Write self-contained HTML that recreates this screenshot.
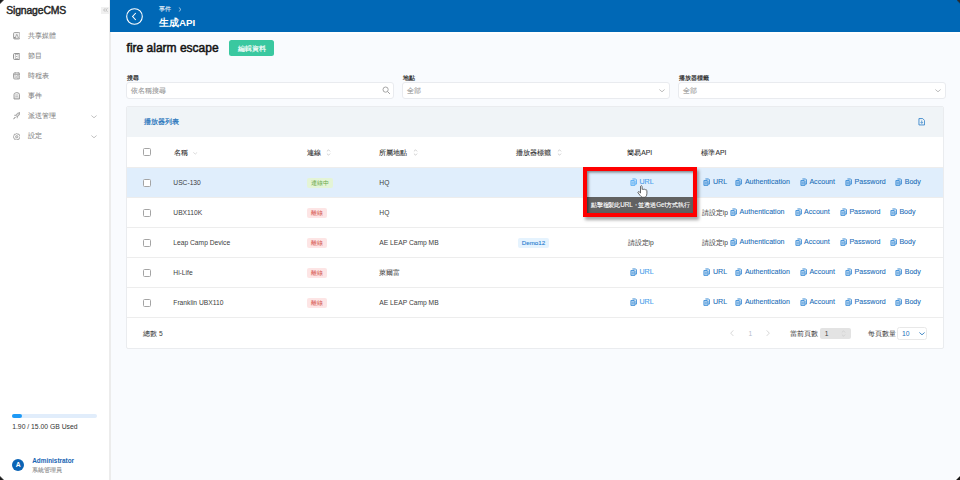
<!DOCTYPE html>
<html><head><meta charset="utf-8">
<style>
*{box-sizing:border-box;margin:0;padding:0}
html,body{width:960px;height:480px;overflow:hidden}
body{position:relative;background:#f9fbfe;font-family:"Liberation Sans",sans-serif;color:#333}
.a{position:absolute;white-space:nowrap}
#side{position:absolute;left:0;top:0;width:111px;height:480px;background:#fff;border-right:2px solid #ececec}
.nav{position:absolute;left:28.3px;font-size:7px;color:#858585;-webkit-text-stroke:0.05px #858585;line-height:10px;white-space:nowrap}
.ni{position:absolute;left:12.5px}
#hdr{position:absolute;left:110px;top:0;width:850px;height:32px;background:#0068b6}
.lbl{position:absolute;top:72.8px;font-size:5.8px;font-weight:bold;color:#333;line-height:10px}
.inp{position:absolute;top:82px;height:16.6px;background:#fff;border:1px solid #e9ebef;border-radius:3px}
.ph{position:absolute;left:4px;top:2.6px;font-size:7px;color:#999;-webkit-text-stroke:0.1px #999;line-height:10px}
#card{position:absolute;left:126px;top:106px;width:818px;height:243px;background:#fff;border:1px solid #eaecef;border-radius:2px;overflow:hidden}
#ch{position:absolute;left:0;top:0;width:816px;height:30px;background:#f0f4f7}
.row{position:absolute;left:0;width:816px;height:30px;border-bottom:1px solid #ededed}
.cb{position:absolute;left:16px;top:11px;width:8px;height:8px;border:1px solid #a4a4a4;border-radius:1.5px;background:#fff}
.c{position:absolute;top:9.9px;line-height:10px;font-size:6.7px;white-space:nowrap}
.th{top:10.7px;color:#333;font-size:6.8px;-webkit-text-stroke:0.1px #333}
.td{color:#3c3c3c}
.row .lnk{top:9.3px}
.lnk{color:#1b6eb8;font-size:7.1px;-webkit-text-stroke:0.08px #1b6eb8}
.ci{color:#3f8ed6;display:inline-block;width:7px;height:8px;vertical-align:-1.6px;margin-right:2.5px;margin-left:0.1px}
.tag{position:absolute;top:9.75px;height:10px;line-height:10px;font-size:5.8px;text-align:center;border-radius:2px}
.on{width:26px;background:#e4f4d6;color:#67a74a}
.off{width:19.6px;background:#fde5e5;color:#d24a43}
.demo{width:30.4px;top:9.9px;font-size:6.2px;background:#e5f3fe;color:#2a7fd0;-webkit-text-stroke:0.1px #2a7fd0}
.sort{position:absolute;top:12.3px}
</style></head><body>
<svg width="0" height="0" style="position:absolute">
 <defs>
  <symbol id="cp" viewBox="0 0 7 8">
   <path d="M2.4 0.9h3.2l0.9 0.9v4.3H5" fill="currentColor" fill-opacity="0.25" stroke="currentColor" stroke-width="0.85"/>
   <path d="M0.9 2.5h3.2l0.8 0.8v4.1H0.9z" fill="currentColor" fill-opacity="0.35" stroke="currentColor" stroke-width="0.9" stroke-linejoin="round"/>
   <path d="M1.8 4.3h2.1M1.8 5.7h2.1" stroke="currentColor" stroke-width="0.6"/>
  </symbol>
 </defs>
</svg>

<div id="side">
  <div class="a" style="left:6.3px;top:3.8px;font-size:10.4px;color:#262626;line-height:14px;letter-spacing:-0.15px;-webkit-text-stroke:0.45px #262626">SignageCMS</div>
  <div class="a" style="left:101.3px;top:6.8px;width:7.5px;height:7.2px;background:#f0f0f0"></div>
  <svg class="a" style="left:102.6px;top:8.4px" width="5" height="4" viewBox="0 0 5 4"><path d="M2.2 0.3L0.6 2l1.6 1.7M4.4 0.3L2.8 2l1.6 1.7" fill="none" stroke="#999" stroke-width="0.6"/></svg>

  <svg class="ni" style="top:32.2px" width="7.5" height="7.5" viewBox="0 0 7.5 7.5"><rect x="0.5" y="0.5" width="6.5" height="6.5" rx="1.2" fill="#f0f0f0" stroke="#909090" stroke-width="0.8"/><path d="M2 6.2L3.8 2.3 5.6 6.2z" fill="#fff" stroke="#8a8a8a" stroke-width="0.7"/><circle cx="1.6" cy="5.8" r="0.8" fill="#888"/></svg>
  <div class="nav" style="top:30.8px">共享媒體</div>
  <svg class="ni" style="top:52.6px" width="7.5" height="7" viewBox="0 0 7.5 7"><rect x="0.6" y="0.6" width="6.3" height="5.8" rx="0.8" fill="none" stroke="#8a8a8a" stroke-width="1"/><rect x="2.4" y="1.6" width="2.7" height="3.8" fill="none" stroke="#a8a8a8" stroke-width="0.6"/><circle cx="3.75" cy="3.5" r="0.6" fill="#8a8a8a"/></svg>
  <div class="nav" style="top:50.8px">節目</div>
  <svg class="ni" style="top:72.4px" width="7.5" height="7.5" viewBox="0 0 7.5 7.5"><rect x="0.5" y="0.9" width="6.5" height="6.1" rx="1.3" fill="#f3f3f3" stroke="#8e8e8e" stroke-width="0.8"/><path d="M0.5 2.6h6.5M2.2 0.3v1.4M5.3 0.3v1.4" stroke="#8e8e8e" stroke-width="0.7"/><circle cx="5" cy="5" r="1.3" fill="#fff" stroke="#858585" stroke-width="0.6"/><path d="M1.4 4h1.4M1.4 5.4h1.4" stroke="#999" stroke-width="0.6"/></svg>
  <div class="nav" style="top:70.8px">時程表</div>
  <svg class="ni" style="top:92.3px" width="7.5" height="7.5" viewBox="0 0 7.5 7.5"><path d="M1 7V2.6Q1 1.1 2.5 0.9L3.75 0.5 5 0.9Q6.5 1.1 6.5 2.6V7z" fill="#f2f2f2" stroke="#8c8c8c" stroke-width="0.8"/><path d="M2.3 3h2.9M2.3 4.6h2.9M1 6.2h5.5" stroke="#a0a0a0" stroke-width="0.6"/></svg>
  <div class="nav" style="top:90.8px">事件</div>
  <svg class="ni" style="top:112.3px" width="7.5" height="7.5" viewBox="0 0 7.5 7.5"><path d="M7 0.5Q4.2 0.8 2.6 3.2L4.3 4.9Q6.7 3.3 7 0.5z" fill="#d6d6d6" stroke="#8a8a8a" stroke-width="0.7"/><path d="M2.6 3.2L1.2 3.3M4.3 4.9L4.2 6.3" stroke="#8a8a8a" stroke-width="0.7"/><path d="M2.1 5.1L0.5 7l1.9-1.6z" fill="#909090" stroke="#909090" stroke-width="0.6"/></svg>
  <div class="nav" style="top:110.8px">派送管理</div>
  <svg class="a" style="left:91px;top:115px" width="6" height="3.5" viewBox="0 0 6 3.5"><path d="M0.4 0.5L3 2.8 5.6 0.5" fill="none" stroke="#a8a8a8" stroke-width="0.7"/></svg>
  <svg class="ni" style="top:132.5px" width="7.5" height="7.5" viewBox="0 0 7.5 7.5"><path d="M3.75 0.5l1.1 0.7h1.2l0.4 1.2 0.8 1.35-0.8 1.35-0.4 1.2H4.85l-1.1 0.7-1.1-0.7H1.45l-0.4-1.2L0.25 3.75l0.8-1.35 0.4-1.2h1.2z" fill="none" stroke="#8a8a8a" stroke-width="0.75"/><circle cx="3.75" cy="3.75" r="1.2" fill="#ddd" stroke="#8a8a8a" stroke-width="0.6"/></svg>
  <div class="nav" style="top:130.8px">設定</div>
  <svg class="a" style="left:91px;top:135px" width="6" height="3.5" viewBox="0 0 6 3.5"><path d="M0.4 0.5L3 2.8 5.6 0.5" fill="none" stroke="#a8a8a8" stroke-width="0.7"/></svg>

  <div class="a" style="left:12px;top:414.2px;width:85.2px;height:3.8px;border-radius:2px;background:#e1edfb"></div>
  <div class="a" style="left:12px;top:414.2px;width:10.4px;height:3.8px;border-radius:2px;background:#1e9af6"></div>
  <div class="a" style="left:12.2px;top:421.5px;font-size:6.8px;color:#333;line-height:10px">1.90 / 15.00 GB Used</div>

  <div class="a" style="left:12px;top:459px;width:12.2px;height:12.2px;border-radius:50%;background:#0b64b5;color:#fff;font-size:6.8px;font-weight:bold;line-height:12.6px;text-align:center">A</div>
  <div class="a" style="left:32.2px;top:455.5px;font-size:6.4px;font-weight:bold;color:#1664b3;line-height:10px">Administrator</div>
  <div class="a" style="left:32.2px;top:465px;font-size:5.9px;color:#8c8c8c;line-height:10px;-webkit-text-stroke:0.1px #8c8c8c">系統管理員</div>
</div>
<div class="a" style="left:0;top:0;width:4px;height:4px;background:linear-gradient(135deg,#1a1a1a 35%,rgba(0,0,0,0) 62%)"></div>
<div class="a" style="left:0;top:476px;width:4px;height:4px;background:linear-gradient(45deg,#1a1a1a 35%,rgba(0,0,0,0) 62%)"></div>

<div class="a" style="left:111px;top:32px;width:849px;height:1.5px;background:#fff"></div>
<div id="hdr">
  <svg class="a" style="left:16px;top:7.5px" width="17" height="17" viewBox="0 0 17 17"><circle cx="8.5" cy="8.5" r="7.8" fill="none" stroke="#fff" stroke-width="1.1"/><path d="M9.8 5L6.6 8.5l3.2 3.5" fill="none" stroke="#fff" stroke-width="1.1"/></svg>
  <div class="a" style="left:49px;top:4px;font-size:5.6px;color:#e8f0f8;line-height:10px;-webkit-text-stroke:0.1px #e8f0f8">事件</div>
  <svg class="a" style="left:68px;top:6.5px" width="4" height="5" viewBox="0 0 4 5"><path d="M0.8 0.4L3 2.5 0.8 4.6" fill="none" stroke="#dbe6f2" stroke-width="0.7"/></svg>
  <div class="a" style="left:49px;top:16px;font-size:9.8px;font-weight:bold;color:#fff;line-height:13px">生成API</div>
</div>

<div class="a" style="left:126.6px;top:40.8px;font-size:12px;color:#141414;line-height:15px;-webkit-text-stroke:0.5px #141414">fire alarm escape</div>
<div class="a" style="left:229.2px;top:40.3px;width:45px;height:16px;background:#3ac8a0;border-radius:2.5px;color:#fff;font-size:6.6px;line-height:17.2px;text-align:center;-webkit-text-stroke:0.15px #fff">編輯資料</div>

<div class="lbl" style="left:127px">搜尋</div>
<div class="lbl" style="left:402.6px">地點</div>
<div class="lbl" style="left:678.9px">播放器標籤</div>
<div class="inp" style="left:126px;width:268px">
  <div class="ph">依名稱搜尋</div>
  <svg class="a" style="left:254.5px;top:3.3px" width="9" height="9" viewBox="0 0 9 9"><circle cx="3.6" cy="3.6" r="2.6" fill="none" stroke="#9c9c9c" stroke-width="0.9"/><path d="M5.5 5.5L7.9 7.9" stroke="#9c9c9c" stroke-width="1"/></svg>
</div>
<div class="inp" style="left:402px;width:268px">
  <div class="ph">全部</div>
  <svg class="a" style="left:256px;top:6.3px" width="6" height="3.5" viewBox="0 0 6 3.5"><path d="M0.4 0.5L3 2.8 5.6 0.5" fill="none" stroke="#a0a0a0" stroke-width="0.7"/></svg>
</div>
<div class="inp" style="left:678px;width:267.5px">
  <div class="ph">全部</div>
  <svg class="a" style="left:255.8px;top:6.3px" width="6" height="3.5" viewBox="0 0 6 3.5"><path d="M0.4 0.5L3 2.8 5.6 0.5" fill="none" stroke="#a0a0a0" stroke-width="0.7"/></svg>
</div>

<div id="card">
  <div id="ch">
    <div class="c lnk" style="left:16.5px;top:9.7px;color:#2272bb;-webkit-text-stroke:0.2px #2272bb">播放器列表</div>
    <svg class="a" style="left:790.7px;top:11px" width="7.5" height="7.5" viewBox="0 0 8 8"><path d="M1 0.6h4l2 2v4.8H1z" fill="none" stroke="#2f80c8" stroke-width="0.9"/><path d="M4 2.6v3M2.7 4.4L4 5.7 5.3 4.4" fill="none" stroke="#2f80c8" stroke-width="0.8"/></svg>
  </div>
  <div class="row" style="top:30px;height:31px">
    <div class="cb"></div>
    <div class="c th" style="left:46.5px">名稱</div>
    <svg class="a" style="left:66.2px;top:15.2px" width="4.5" height="2.6" viewBox="0 0 6 3.5"><path d="M0.4 0.5L3 2.8 5.6 0.5" fill="none" stroke="#b0b0b0" stroke-width="0.6"/></svg>
    <div class="c th" style="left:179.8px">連線</div>
    <svg class="sort" style="left:199px" width="5" height="7" viewBox="0 0 5 7"><path d="M0.9 2.4L2.5 0.8 4.1 2.4M0.9 4.6L2.5 6.2 4.1 4.6" fill="none" stroke="#b0b0b0" stroke-width="0.6"/></svg>
    <div class="c th" style="left:252.3px">所屬地點</div>
    <svg class="sort" style="left:286px" width="5" height="7" viewBox="0 0 5 7"><path d="M0.9 2.4L2.5 0.8 4.1 2.4M0.9 4.6L2.5 6.2 4.1 4.6" fill="none" stroke="#b0b0b0" stroke-width="0.6"/></svg>
    <div class="c th" style="left:389px">播放器標籤</div>
    <svg class="sort" style="left:429.7px" width="5" height="7" viewBox="0 0 5 7"><path d="M0.9 2.4L2.5 0.8 4.1 2.4M0.9 4.6L2.5 6.2 4.1 4.6" fill="none" stroke="#b0b0b0" stroke-width="0.6"/></svg>
    <div class="c th" style="left:500.25px">簡易API</div>
    <div class="c th" style="left:574.4px">標準API</div>
  </div>
<div class="row" style="top:61px;background:#e0eefc">
<div class="cb"></div>
<div class="c td" style="left:46.3px">USC-130</div>
<div class="tag on" style="left:179.8px">連線中</div>
<div class="c td" style="left:252.3px">HQ</div>
<div class="c lnk" style="left:502.9px;color:#4aa4f2"><svg class="ci" style="color:#5aaef4" viewBox="0 0 7 8"><use href="#cp"/></svg>URL</div>
<div class="c lnk" style="left:576.4px"><svg class="ci" viewBox="0 0 7 8"><use href="#cp"/></svg>URL</div>
<div class="c lnk" style="left:608.3px"><svg class="ci" viewBox="0 0 7 8"><use href="#cp"/></svg>Authentication</div>
<div class="c lnk" style="left:672.8px"><svg class="ci" viewBox="0 0 7 8"><use href="#cp"/></svg>Account</div>
<div class="c lnk" style="left:718px"><svg class="ci" viewBox="0 0 7 8"><use href="#cp"/></svg>Password</div>
<div class="c lnk" style="left:768.1px"><svg class="ci" viewBox="0 0 7 8"><use href="#cp"/></svg>Body</div>
</div>
<div class="row" style="top:91px">
<div class="cb"></div>
<div class="c td" style="left:46.3px">UBX110K</div>
<div class="tag off" style="left:180px">離線</div>
<div class="c td" style="left:252.3px">HQ</div>
<div class="c td" style="left:500.5px">請設定ip</div>
<div class="c td" style="left:574.7px">請設定ip</div>
<div class="c lnk" style="left:603px"><svg class="ci" viewBox="0 0 7 8"><use href="#cp"/></svg>Authentication</div>
<div class="c lnk" style="left:667.5px"><svg class="ci" viewBox="0 0 7 8"><use href="#cp"/></svg>Account</div>
<div class="c lnk" style="left:712.8px"><svg class="ci" viewBox="0 0 7 8"><use href="#cp"/></svg>Password</div>
<div class="c lnk" style="left:762.8px"><svg class="ci" viewBox="0 0 7 8"><use href="#cp"/></svg>Body</div>
</div>
<div class="row" style="top:121px">
<div class="cb"></div>
<div class="c td" style="left:46.3px">Leap Camp Device</div>
<div class="tag off" style="left:180px">離線</div>
<div class="c td" style="left:252.3px">AE LEAP Camp MB</div>
<div class="tag demo" style="left:391.3px">Demo12</div>
<div class="c td" style="left:500.5px">請設定ip</div>
<div class="c td" style="left:574.7px">請設定ip</div>
<div class="c lnk" style="left:603px"><svg class="ci" viewBox="0 0 7 8"><use href="#cp"/></svg>Authentication</div>
<div class="c lnk" style="left:667.5px"><svg class="ci" viewBox="0 0 7 8"><use href="#cp"/></svg>Account</div>
<div class="c lnk" style="left:712.8px"><svg class="ci" viewBox="0 0 7 8"><use href="#cp"/></svg>Password</div>
<div class="c lnk" style="left:762.8px"><svg class="ci" viewBox="0 0 7 8"><use href="#cp"/></svg>Body</div>
</div>
<div class="row" style="top:151px">
<div class="cb"></div>
<div class="c td" style="left:46.3px">Hi-Life</div>
<div class="tag off" style="left:180px">離線</div>
<div class="c td" style="left:252.3px">萊爾富</div>
<div class="c lnk" style="left:502.9px;color:#4aa4f2"><svg class="ci" viewBox="0 0 7 8"><use href="#cp"/></svg>URL</div>
<div class="c lnk" style="left:576.4px"><svg class="ci" viewBox="0 0 7 8"><use href="#cp"/></svg>URL</div>
<div class="c lnk" style="left:608.3px"><svg class="ci" viewBox="0 0 7 8"><use href="#cp"/></svg>Authentication</div>
<div class="c lnk" style="left:672.8px"><svg class="ci" viewBox="0 0 7 8"><use href="#cp"/></svg>Account</div>
<div class="c lnk" style="left:718px"><svg class="ci" viewBox="0 0 7 8"><use href="#cp"/></svg>Password</div>
<div class="c lnk" style="left:768.1px"><svg class="ci" viewBox="0 0 7 8"><use href="#cp"/></svg>Body</div>
</div>
<div class="row" style="top:181px">
<div class="cb"></div>
<div class="c td" style="left:46.3px">Franklin UBX110</div>
<div class="tag off" style="left:180px">離線</div>
<div class="c td" style="left:252.3px">AE LEAP Camp MB</div>
<div class="c lnk" style="left:502.9px;color:#4aa4f2"><svg class="ci" viewBox="0 0 7 8"><use href="#cp"/></svg>URL</div>
<div class="c lnk" style="left:576.4px"><svg class="ci" viewBox="0 0 7 8"><use href="#cp"/></svg>URL</div>
<div class="c lnk" style="left:608.3px"><svg class="ci" viewBox="0 0 7 8"><use href="#cp"/></svg>Authentication</div>
<div class="c lnk" style="left:672.8px"><svg class="ci" viewBox="0 0 7 8"><use href="#cp"/></svg>Account</div>
<div class="c lnk" style="left:718px"><svg class="ci" viewBox="0 0 7 8"><use href="#cp"/></svg>Password</div>
<div class="c lnk" style="left:768.1px"><svg class="ci" viewBox="0 0 7 8"><use href="#cp"/></svg>Body</div>
</div>
  <div class="c td" style="left:16.1px;top:222px">總數 5</div>
  <svg class="a" style="left:602.6px;top:223.2px" width="4" height="6.3" viewBox="0 0 4 6.3"><path d="M3.3 0.4L0.7 3.15 3.3 5.9" fill="none" stroke="#c6c6c6" stroke-width="0.7"/></svg>
  <div class="c" style="left:621.5px;top:222px;color:#b3bccb">1</div>
  <svg class="a" style="left:638.6px;top:223.2px" width="4" height="6.3" viewBox="0 0 4 6.3"><path d="M0.7 0.4L3.3 3.15 0.7 5.9" fill="none" stroke="#c6c6c6" stroke-width="0.7"/></svg>
  <div class="c td" style="left:663.2px;top:222px">當前頁數</div>
  <div class="a" style="left:693.2px;top:220.5px;width:30.5px;height:11.3px;background:#e3e3e3;border-radius:2px"></div>
  <div class="c td" style="left:697.8px;top:221.5px">1</div>
  <svg class="a" style="left:713.6px;top:222.5px" width="5" height="7" viewBox="0 0 5 7"><path d="M0.9 2.4L2.5 0.8 4.1 2.4M0.9 4.6L2.5 6.2 4.1 4.6" fill="none" stroke="#c8c8c8" stroke-width="0.6"/></svg>
  <div class="c td" style="left:740.5px;top:222px">每頁數量</div>
  <div class="a" style="left:770.3px;top:220.3px;width:30px;height:12.4px;background:#fff;border:1px solid #e8e8e8;border-radius:2.5px"></div>
  <div class="c" style="left:775px;top:221.8px;color:#1b6fb9;font-size:6.8px">10</div>
  <svg class="a" style="left:792px;top:224.60000000000002px" width="6" height="3.5" viewBox="0 0 6 3.5"><path d="M0.4 0.5L3 2.8 5.6 0.5" fill="none" stroke="#1b6fb9" stroke-width="0.8"/></svg>
</div>

<div class="a" style="left:587px;top:197.2px;width:106px;height:16px;background:#616161"></div>
<div class="a" style="left:590.8px;top:199.6px;font-size:6.3px;color:#fff;line-height:10px;letter-spacing:-0.1px;-webkit-text-stroke:0.1px #fff">點擊複製此URL・並透過Get方式執行</div>
<div class="a" style="left:583px;top:167px;width:114px;height:50px;border:4px solid #ff0000;box-shadow:2px 3px 3px rgba(0,0,0,0.35), inset 1.5px 1.5px 2.5px rgba(0,0,0,0.45)"></div>
<div class="a" style="left:956.5px;top:0;width:3.5px;height:3.5px;background:linear-gradient(225deg,#2a2a2a 35%,rgba(0,0,0,0) 62%)"></div>
<div class="a" style="left:955px;top:475px;width:5px;height:5px;background:linear-gradient(315deg,#1a1a1a 30%,#fff 48%,rgba(255,255,255,0) 65%)"></div>
<svg class="a" style="left:636.8px;top:185.2px" width="11" height="13" viewBox="0 0 11 13"><path d="M3.5 1.3Q4.3 0 5.1 1.3V4.4Q5.9 3.7 6.7 4.4Q7.5 3.9 8.3 4.7Q9.3 4.4 9.9 5.4V8.8Q9.9 11 8.2 12.3H5Q4 11.6 3 10.3L1 7.8Q0.6 7 1.4 6.7Q2.2 6.5 3.5 8Z" fill="#fff" stroke="#3a3a3a" stroke-width="0.75" stroke-linejoin="round"/></svg>
</body></html>
